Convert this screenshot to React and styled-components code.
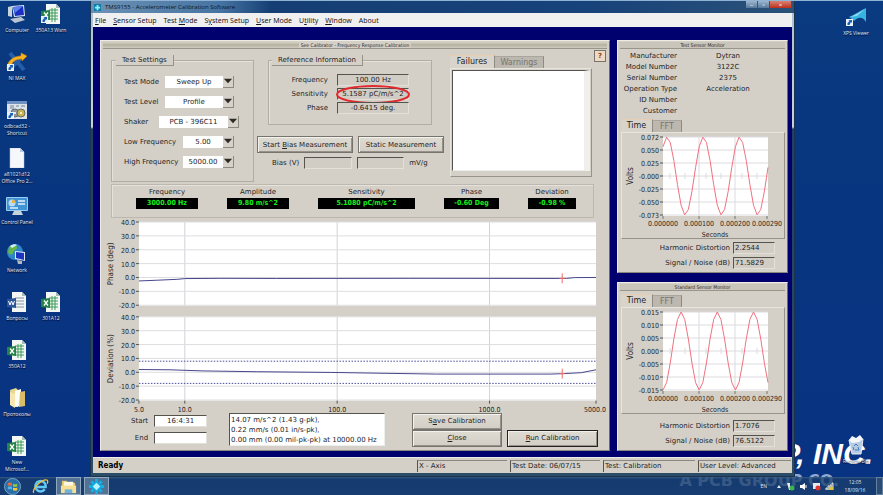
import { Fragment, useState } from "react"
import styled, { createGlobalStyle } from "styled-components"

const Global = createGlobalStyle`
  * { box-sizing: border-box; }
  body {
    margin: 0;
    background: #08357f;
    font-family: "DejaVu Sans", sans-serif;
    font-size: 7px;
    line-height: 10px;
    color: #26241f;
  }
  button, input, select, textarea {
    font: inherit;
    color: inherit;
    margin: 0;
    border-radius: 0;
  }
`

/* ---------- desktop ---------- */

const Page = styled.div`
  position: relative;
  min-height: 100vh;
  display: flex;
  flex-direction: column;
  overflow: hidden;
  background: linear-gradient(#0a3a80, #08357f 40%, #083383);
  border-top: 1px solid #8fb3d4;
`
const Desktop = styled.div`
  flex: 1;
  display: grid;
  grid-template-columns: 90px minmax(0, 1fr) 88px;
`
const Wallpaper = styled.div`
  position: absolute;
  right: 10px;
  bottom: 24px;
  font: italic bold 30px/34px "Liberation Sans", sans-serif;
  color: #fff;
`
const WallpaperSub = styled.div`
  position: absolute;
  right: 44px;
  bottom: 5px;
  font: bold 16px/18px "DejaVu Sans", sans-serif;
  color: #8fa9cf;
`
const Icons = styled.div`
  display: grid;
  grid-template-columns: 34px 34px;
  grid-template-rows: repeat(9, 48px) auto;
  align-content: start;
  padding-top: 3px;
`
const IconLink = styled.a`
  grid-column: ${p => p.$col || 1};
  grid-row: ${p => p.$row};
  display: flex;
  flex-direction: column;
  align-items: center;
  gap: 3px;
  font: 5px/7px "Open Sans", sans-serif;
  color: #e4ebf5;
  text-align: center;
  text-decoration: none;
  white-space: pre;
  text-shadow: 0 1px 1px #001;
  svg { width: 22px; height: 20px; flex: none; }
`
const RightIcons = styled.div`
  z-index: 1;
  display: flex;
  flex-direction: column;
  justify-content: space-between;
  align-items: center;
  padding: 6px 0 12px 34px;
`

function Arrow() {
  return (
    <g>
      <rect x="1" y="12" width="7" height="7" fill="#e9f1fa" />
      <path d="M2.5 18v-2l2-2-1-1h3.5v3l-1-1-1.500 3z" fill="#1c5fb0" />
    </g>
  )
}

function Glyph({ kind, arrow }) {
  return (
    <svg viewBox="0 0 22 20" aria-hidden="true">
      {kind === "computer" && <>
        <path d="M2 3l4-1v11l-4-1z" fill="#c9d3dc" />
        <path d="M6 2l12-1 1 11-11 1z" fill="#dfe7f2" />
        <path d="M7 3l10-1 1 9-9 1z" fill="#1b2fc4" />
        <path d="M7 3l10-1-8 7z" fill="#5a80ee" />
        <path d="M4 15l11-2 4 3-10 3z" fill="#bac5cf" />
      </>}
      {kind === "nimax" && <>
        <path d="M4 1l14 17M18 3L3 18" stroke="#235fa8" strokeWidth="4" />
        <path d="M1 17C1 9 7 4 15 4V1l6 3-5 5V7C9 7 5 10 5 17z" fill="#f7b21d" stroke="#d47f0b" strokeWidth=".5" />
      </>}
      {kind === "tool" && <>
        <rect x="1" y="1" width="20" height="18" fill="#dbe2ea" />
        <rect x="1" y="1" width="20" height="3" fill="#6d92bf" />
        <path d="M4 6h4M10 6h3M15 6h4M4 8h4" stroke="#738498" />
        <circle cx="9" cy="13" r="4" fill="#8f989f" stroke="#606a70" />
        <circle cx="9" cy="13" r="1" fill="#fff" />
        <circle cx="15" cy="13" r="4" fill="#c5b450" stroke="#68706b" />
        <circle cx="15" cy="13" r="1" fill="#fff" />
      </>}
      {kind === "file" && <>
        <path d="M4 0h10l4 4v16H4z" fill="#f5f7fa" stroke="#b9c5d5" strokeWidth=".5" />
        <path d="M14 0v4h4z" fill="#b9c8dc" />
      </>}
      {kind === "control" && <>
        <rect x="0" y="1" width="22" height="14" rx="1" fill="#9bcdf0" />
        <rect x="1" y="2" width="20" height="12" fill="#3f94d5" />
        <circle cx="6" cy="7" r="3.500" fill="#b7dcf3" />
        <path d="M6 7V3.500A3.500 3.500 0 0 1 9.500 7z" fill="#efb247" />
        <path d="M12 5h7M12 8h7M4 12h8" stroke="#e2f1fb" strokeWidth="1.500" />
        <path d="M8 15h7l2 4H6z" fill="#c8d3dc" />
      </>}
      {kind === "network" && <>
        <circle cx="9" cy="8" r="8" fill="#2d86c8" />
        <path d="M3 3c4-3 7-2 8 0s-3 3-4 6-4 2-5-1z" fill="#64b44a" />
        <path d="M4 2c3-2 6-2 7-1L6 4z" fill="#d9eff7" />
        <path d="M9 7l10 1v9l-10-2z" fill="#dfe7f2" />
        <path d="M10 8l8 1v7l-8-2z" fill="#1c35c0" />
        <path d="M11 16l5 1v3h-4z" fill="#aeb9c4" />
      </>}
      {(kind === "excel" || kind === "word") && <>
        <path d="M6 0h10l4 4v16H6z" fill="#f3f7f4" />
        <path d="M16 0v4h4z" fill="#a8bcae" />
        {kind === "excel"
          ? <path d="M9 6h9M9 9h9M9 12h9M9 15h9M12 4v14M15 4v14" stroke="#3f9a5b" />
          : <path d="M9 6h9M9 9h9M9 12h9M9 15h9" stroke="#8494ae" />}
        <path d="M1 7l9-1v10l-9-1z" fill={kind === "excel" ? "#238347" : "#2b579a"} />
        {kind === "excel"
          ? <path d="M4 8.500l4 5M8 8.500l-4 5" stroke="#fff" strokeWidth="1.300" />
          : <path d="M2.500 9l1.500 4 1.500-4 1.500 4 1.500-4" stroke="#fff" fill="none" />}
      </>}
      {kind === "folder" && <>
        <path d="M4 2l6-2 2 2v17l-7-2z" fill="#ead58f" />
        <path d="M9 3l6-2v17l-6 1z" fill="#fdfdf8" />
        <path d="M14 4l5-1v15l-6 1z" fill="#d9bd69" />
        <path d="M4 4l5 2v14l-5-3z" fill="#f6e6af" />
      </>}
      {kind === "xps" && <>
        <path d="M4 10C9 8 14 4 21 1v14c-3-5-7-6-12-1-2-2-3-3-5-4z" fill="#36b3df" />
        <path d="M5 10C10 8 15 5 20 2l-8 7z" fill="#8adcf2" />
      </>}
      {kind === "bin" && <>
        <path d="M4 5l14-1-2 15H7z" fill="#b6cbe2" stroke="#e3eef7" />
        <path d="M4 5l3-4 4 2 4-3 3 4-4 3-7 1z" fill="#f4f7fa" />
        <path d="M9 11l2-2 2 2M13 12l1 3h-4M9 15l-1-3" stroke="#3a7cc4" fill="none" />
      </>}
      {arrow && <Arrow />}
    </svg>
  )
}

const shortcuts = [
  { row: 1, kind: "computer", text: "Computer" },
  { row: 1, col: 2, kind: "excel", text: "350A13 Wsrn", arrow: true },
  { row: 2, kind: "nimax", text: "NI MAX", arrow: true },
  { row: 3, kind: "tool", text: "odbcad32 -\nShortcut", arrow: true },
  { row: 4, kind: "file", text: "a81021d12\nOffice Pro 2..." },
  { row: 5, kind: "control", text: "Control Panel" },
  { row: 6, kind: "network", text: "Network" },
  { row: 7, kind: "word", text: "Вопросы" },
  { row: 7, col: 2, kind: "excel", text: "301A12" },
  { row: 8, kind: "excel", text: "350A12" },
  { row: 9, kind: "folder", text: "Протоколы" },
  { row: 10, kind: "excel", text: "New\nMicrosof..." },
]

/* ---------- application window ---------- */

const AppWindow = styled.main`
  z-index: 1;
  display: flex;
  flex-direction: column;
  min-width: 0;
  padding: 0 2px 3px;
  background: linear-gradient(#a9bfd2, #c5d2dc 126px, #1d4263 128px, #2c4d68);
  border: 1px solid #1a3450;
  border-top: 0;
`
const TitleBar = styled.header`
  height: 12px;
  margin: 0 -2px;
  padding-left: 3px;
  display: flex;
  align-items: center;
  gap: 4px;
  background: linear-gradient(90deg, #6d91b4, #4674a2 130px, #153f74 180px, #17427a 70%, #2c5279);
  font: 6px/10px "Open Sans", sans-serif;
  color: #0a1826;
  svg { width: 7px; height: 7px; }
`
const Caption = styled.span`
  flex: 1;
`
const WinButtons = styled.div`
  display: flex;
  align-self: flex-start;
  padding-right: 2px;
`
const WinButton = styled.button`
  width: ${p => p.$close ? 22 : 12}px;
  height: 7px;
  padding: 0;
  border: 0;
  border-right: 1px solid #34567b;
  background: ${p => p.$close ? "linear-gradient(#d88374, #bd2f1c)" : "linear-gradient(#9db5cd, #56789b)"};
  color: #fff;
  font-size: 6px;
  line-height: 6px;
`
const Menu = styled.nav`
  display: flex;
  gap: 7px;
  height: 14px;
  padding-left: 2px;
  background: #f0f0f0;
  font: 7px/15px "Noto Sans", sans-serif;
  a { color: #17171b; text-decoration: none; white-space: nowrap; }
`
const Workspace = styled.div`
  flex: 1;
  display: flex;
  gap: 7px;
  padding: 13px 4px 6px 7px;
  background: #00006e;
`
const Side = styled.div`
  flex: 0 0 171px;
  display: flex;
  flex-direction: column;
  gap: 9px;
`
const Pane = styled.section`
  flex: ${p => p.$grow ? "1" : "none"};
  min-width: 0;
  display: flex;
  flex-direction: column;
  padding: 1px 2px;
  background: #d4d0c8;
  border: 1px solid #eeebe4;
  border-right-color: #6f6c65;
  border-bottom-color: #8a877f;
`
const PaneTitle = styled.h2`
  display: flex;
  align-items: center;
  justify-content: center;
  gap: 2px;
  height: 7px;
  margin: 0;
  background: ${p => p.$lined ? "none" : "#c9c5ba"};
  border-bottom: 1px solid #98958b;
  font: 5px/6px "DejaVu Sans Condensed", sans-serif;
  &::before, &::after {
    content: "";
    flex: ${p => p.$lined ? 1 : 0};
    height: 6px;
    background: linear-gradient(#d5d2c5, #b4b19f 50%, #d0ccc0);
  }
`
const Main = styled.div`
  flex: 1;
  display: flex;
  flex-direction: column;
`
const Upper = styled.div`
  display: flex;
  align-items: flex-start;
  padding: 3px 0 0 8px;
  height: 134px;
`
const Group = styled.fieldset`
  width: ${p => p.$w}px;
  height: ${p => p.$h}px;
  margin: ${p => p.$push || 0}px 0 0;
  padding: ${p => p.$pad};
  border: 1px solid #b1ada4;
  box-shadow: inset 1px 1px #e5e2dc;
  display: flex;
  flex-direction: column;
  gap: ${p => p.$gap}px;
  legend {
    margin-left: -8px;
    padding: 0 6px;
    font-size: 7px;
    line-height: 10px;
    background: #d4d0c8;
    border-right: 1px solid #96938b;
    border-bottom: 1px solid #96938b;
  }
`
const SettingRow = styled.label`
  display: flex;
  align-items: center;
  justify-content: space-between;
  width: ${p => p.$wide ? 115 : 110}px;
  height: 14px;
  white-space: nowrap;
`
const SelectBox = styled.span`
  position: relative;
  width: ${p => p.$w}px;
  height: 12px;
  select {
    display: block;
    width: 100%;
    height: 12px;
    padding: 0 12px 0 1px;
    appearance: none;
    border: 0;
    background: #fff;
    text-align-last: center;
  }
  svg {
    position: absolute;
    top: 0;
    right: 0;
    width: 11px;
    height: 12px;
    background: #d6d2ca;
    border-right: 1px solid #8b8880;
    border-bottom: 1px solid #8b8880;
    pointer-events: none;
  }
`
const Middle = styled.div`
  width: 187px;
  margin-left: 3px;
  display: flex;
  flex-direction: column;
  padding-top: 3px;
`
const RefRow = styled.label`
  position: relative;
  width: 129px;
  display: grid;
  grid-template-columns: 48px 72px;
  gap: 9px;
  text-align: right;
  align-items: center;
`
const Sunken = styled.input`
  width: ${p => p.$w}px;
  height: 12px;
  min-width: 0;
  padding: 0 1px;
  border: 1px solid #e3e0da;
  border-top-color: #55534e;
  border-left-color: #55534e;
  background: ${p => p.$white ? "#fff" : "#d1cdc5"};
  text-align: ${p => p.$left ? "left" : "center"};
`
const Ring = styled.svg`
  position: absolute;
  right: -2px;
  top: -3px;
  width: 75px;
  height: 19px;
  overflow: visible;
  pointer-events: none;
`
const Line = styled.div`
  display: flex;
  align-items: center;
  gap: ${p => p.$gap}px;
  padding-left: ${p => p.$indent || 0}px;
  margin-top: ${p => p.$top || 0}px;
  white-space: nowrap;
`
const Btn = styled.button`
  width: ${p => p.$w}px;
  height: 17px;
  padding: 0;
  background: linear-gradient(#dedbd3, #d2cec5);
  border: 1px solid ${p => p.$default ? "#22211f" : "#77746d"};
  box-shadow: inset 1px 1px #f4f2ed, inset -1px -1px #96928a;
  white-space: nowrap;
`
const Alerts = styled.div`
  width: 142px;
  margin: 3px 0 0 auto;
`
const Tabs = styled.div`
  display: flex;
  align-items: flex-end;
  height: 13px;
`
const Tab = styled.button`
  width: ${p => p.$w}px;
  height: ${p => p.$on ? 13 : 12}px;
  padding: 0;
  font-size: 8px;
  border: 0;
  border-right: 1px solid #8e8b83;
  border-top: 1px solid ${p => p.$on ? "#e9cdb0" : "#aaa69d"};
  background: ${p => p.$on ? "#d8d4cc" : "#bcb8af"};
  color: ${p => p.$on ? "#26241f" : "#77746e"};
`
const TabBody = styled.div`
  padding: ${p => p.$pad};
  border: 1px solid #e8e5df;
  border-right-color: #96938b;
  border-bottom-color: #96938b;
`
const Messages = styled.textarea`
  display: block;
  width: 100%;
  height: 101px;
  resize: none;
  border: 1px solid #55534e;
  border-right: 6px solid #f1efeb;
  border-bottom-color: #eee;
  background: #fff;
  outline: 0;
`
const Help = styled.button`
  width: 12px;
  height: 12px;
  margin: -2px 1px 0 2px;
  padding: 0;
  border: 1px solid #77746d;
  background: #f0d9c2;
  color: #8a4318;
  font-weight: bold;
  line-height: 8px;
`
const Readouts = styled.div`
  display: flex;
  gap: 29px;
  height: 34px;
  margin: 1px 13px 0 8px;
  padding: 2px 0 2px 24px;
  border: 1px solid #bcb8b0;
  box-shadow: inset 1px 1px #e5e2dc;
`
const Readout = styled.div`
  flex: 0 0 ${p => p.$w}px;
  text-align: center;
  output {
    display: block;
    height: 11px;
    margin-top: 1px;
    background: #000;
    color: #14f21c;
    font-family: "DejaVu Sans Condensed", sans-serif;
    font-weight: bold;
    line-height: 11px;
  }
`
const Plot = styled.svg`
  display: block;
  width: 100%;
  height: auto;
  font-family: "DejaVu Sans Condensed", sans-serif;
  font-size: 7px;
  fill: #26241f;
`
const Footer = styled.div`
  display: flex;
  align-items: center;
  gap: 5px;
  padding: 0 9px 0 28px;
`
const Times = styled.div`
  width: 75px;
  margin-right: 18px;
  display: grid;
  gap: 5px;
  label {
    display: flex;
    align-items: center;
    justify-content: flex-end;
    gap: 6px;
  }
`
const Notes = styled.textarea`
  width: 156px;
  height: 33px;
  margin-right: auto;
  padding: 1px;
  resize: none;
  overflow: hidden;
  white-space: pre;
  line-height: 10px;
  border: 1px solid #eee;
  border-top-color: #55534e;
  border-left-color: #55534e;
  background: #fff;
`
const Stack = styled.div`
  display: flex;
  flex-direction: column;
`
const Info = styled.dl`
  display: grid;
  grid-template-columns: 56px 1fr;
  grid-auto-rows: 11px;
  column-gap: 6px;
  margin: 2px 8px 0 1px;
  line-height: 11px;
  height: 65px;
  dt { justify-self: end; white-space: nowrap; }
  dd { margin: 0 0 0 -4px; text-align: center; }
`
const Monitor = styled.div`
  flex: 1;
  display: flex;
  flex-direction: column;
  padding: 3px 0 0 1px;
`
const Figures = styled.div`
  flex: 1;
  display: grid;
  gap: 3px;
  align-content: end;
  padding: 3px 10px 2px 0;
  label {
    display: flex;
    justify-content: flex-end;
    align-items: center;
    gap: 3px;
  }
`
const Status = styled.footer`
  display: grid;
  grid-template-columns: 1fr 90px 90px 92px 93px;
  gap: 3px;
  align-items: center;
  height: 16px;
  padding: 0 1px 0 5px;
  background: #d4d0c8;
  border-top: 1px solid #eceae5;
  line-height: 11px;
  strong { font: bold 8px/11px "DejaVu Sans Condensed", sans-serif; color: #000; }
  span {
    padding-left: 1px;
    border-top: 1px solid #8b8880;
    border-left: 1px solid #55534e;
    white-space: nowrap;
  }
`

/* ---------- taskbar ---------- */

const Taskbar = styled.div`
  z-index: 2;
  height: 18px;
  display: flex;
  align-items: center;
  gap: 3px;
  background: linear-gradient(#3c5f83f0, #193d6abf 2px, #1b3f6dbf);
  color: #dfe8f2;
`
const TaskButton = styled.button`
  width: 25px;
  height: 18px;
  padding: 0;
  display: grid;
  place-items: center;
  border: ${p => p.$open ? "1px solid #91a9bf" : 0};
  background: ${p => p.$open ? "#7892aaa0" : "none"};
  svg { width: 17px; height: 17px; }
`
const Tray = styled.div`
  margin-left: auto;
  display: flex;
  align-items: center;
  gap: 4px;
  font: 5px/8px "Open Sans", sans-serif;
  text-align: center;
  svg { height: 9px; }
  time { width: 28px; margin: 0 3px; }
`
const TrayLang = styled.span`
  margin-right: 5px;
`
const ShowDesktop = styled.button`
  width: 7px;
  height: 18px;
  padding: 0;
  border: 1px solid #6481a0;
  background: #294d78;
`

function Choice({ label, value, w, wide }) {
  return (
    <SettingRow $wide={wide}>
      {label}
      <SelectBox $w={w}>
        <select defaultValue={value}><option>{value}</option></select>
        <svg viewBox="0 0 11 12"><path d="M1 3h9L5.500 8z" fill="#2c2b28" /></svg>
      </SelectBox>
    </SettingRow>
  )
}

const phase = [[5, -2.5], [6.5, -2], [9, -1.300], [10, -.8], [17, -.6], [40, -.7], [300, -.6], [3200, -.7], [3600, -.1], [5000, 0]]
const deviation = [[5, 2], [8, 1.800], [13, 1], [30, .4], [90, -.1], [200, -.7], [450, -1.300], [2500, -1.300], [3000, -1], [4000, -.3], [5000, 1.800]]

function Response() {
  const x = f => 36 + Math.log10(f / 5) / 3 * 458
  const plots = [
    { top: 4, name: "Phase (deg)", data: phase, mark: -.6 },
    { top: 99, name: "Deviation (%)", data: deviation, mark: -.98, limits: [8, -8] },
  ]
  return (
    <Plot viewBox="0 0 505 195" role="img" aria-label="Frequency response">
      {plots.map(p => {
        const y = v => p.top + (40 - v) * 1.39
        return (
          <g key={p.name}>
            <rect x="36" y={p.top} width="458" height="84" fill="#fff" />
            {[10, 100, 1000].map(f => <path key={f} d={`M${x(f)} ${p.top}v84`} stroke="#d3d3d8" />)}
            {[40, 30, 20, 10, 0, -10, -20].map(v => (
              <g key={v}>
                <path d={`M36 ${y(v)}h458`} stroke="#dedee2" />
                <path d={`M33 ${y(v)}h3`} stroke="#55534e" />
                <text x="32" y={y(v) + 3} textAnchor="end">{v.toFixed(1)}</text>
              </g>
            ))}
            {p.limits?.map(v => <path key={v} d={`M36 ${y(v)}h458`} stroke="#4c4c9c" strokeDasharray="1.500 1.500" />)}
            <polyline points={p.data.map(([f, v]) => `${x(f)},${y(v)}`).join(" ")} fill="none" stroke="#45458c" />
            <path d={`M${x(3000)} ${y(p.mark) - 5}v10m-3-5h6`} stroke="#ee6d6d" fill="none" />
            <text transform={`translate(10 ${p.top + 42}) rotate(-90)`} textAnchor="middle" fontSize="8">{p.name}</text>
          </g>
        )
      })}
      {[5, 10, 100, 1000, 5000].map(f => (
        <g key={f}>
          <path d={`M${x(f)} 183v3`} stroke="#55534e" />
          <text x={Math.min(x(f), 493)} y="194" textAnchor="middle">{f.toFixed(1)}</text>
        </g>
      ))}
    </Plot>
  )
}

function Wave({ ticks, start }) {
  const pts = []
  for (let i = 0; i <= 29; i++) {
    const t = i / 10
    pts.push(`${41 + i / 29 * 105},${45 - 39 * Math.sin(start + t * 2 * Math.PI)}`)
  }
  return (
    <Plot viewBox="0 2 162 105" role="img" aria-label="Volts over seconds">
      <rect x="41" y="6" width="105" height="79" fill="#fff" />
      {ticks.map((t, i) => {
        const y = 6 + i * 13
        return (
          <g key={t}>
            <path d={`M41 ${y}h105`} stroke="#dcdce0" />
            <path d={`M38 ${y}h3`} stroke="#55534e" />
            <text x="37" y={y + 3} textAnchor="end">{t}</text>
          </g>
        )
      })}
      {[77, 113].map(x => <path key={x} d={`M${x} 6v79`} stroke="#dcdce0" />)}
      {[48, 63, 84, 99, 120, 135].map(x => <path key={x} d={`M${x} 42v6`} stroke="#dcdce0" />)}
      <polyline points={pts.join(" ")} fill="none" stroke="#f0717f" />
      {["0.000000", "0.000100", "0.000200", "0.000290"].map((t, i) => (
        <g key={t}>
          <path d={`M${[41, 77, 113, 145][i]} 85v3`} stroke="#77746d" />
          <text x={[41, 77, 113, 145][i]} y="95" textAnchor="middle">{t}</text>
        </g>
      ))}
      <text x="93" y="106" textAnchor="middle">Seconds</text>
      <text transform="translate(11 45) rotate(-90)" textAnchor="middle" fontSize="8">Volts</text>
    </Plot>
  )
}

function Sensor({ ticks, start, distortion, noise }) {
  const [tab, setTab] = useState("Time")
  return (
    <Monitor>
      <Tabs>
        <Tab $w={32} $on={tab === "Time"} onClick={() => setTab("Time")}>Time</Tab>
        <Tab $w={29} $on={tab === "FFT"} onClick={() => setTab("FFT")}>FFT</Tab>
      </Tabs>
      <TabBody $pad="0"><Wave ticks={ticks} start={start} /></TabBody>
      <Figures>
        <label>Harmonic Distortion <Sunken $w={42} $left readOnly value={distortion} /></label>
        <label>Signal / Noise (dB) <Sunken $w={42} $left readOnly value={noise} /></label>
      </Figures>
    </Monitor>
  )
}

const info = [
  ["Manufacturer", "Dytran"],
  ["Model Number", "3122C"],
  ["Serial Number", "2375"],
  ["Operation Type", "Acceleration"],
  ["ID Number", ""],
  ["Customer", ""],
]

const readouts = [
  ["Frequency", "3000.00 Hz", 62],
  ["Amplitude", "9.80 m/s^2", 62],
  ["Sensitivity", "5.1080 pC/m/s^2", 97],
  ["Phase", "-0.60 Deg", 55],
  ["Deviation", "-0.98 %", 48],
]

function Calibrator() {
  const [tab, setTab] = useState("Failures")
  return (
    <Pane $grow>
      <PaneTitle $lined>See Calibrator - Frequency Response Calibration</PaneTitle>
      <Main>
        <Upper>
          <Group $w={143} $h={127} $push={3} $pad="9px 0 0 12px" $gap={6}>
            <legend>Test Settings</legend>
            <Choice label="Test Mode" value="Sweep Up" w={69} />
            <Choice label="Test Level" value="Profile" w={69} />
            <Choice label="Shaker" value="PCB - 396C11" w={80} wide />
            <Choice label="Low Frequency" value="5.00" w={51} />
            <Choice label="High Frequency" value="5000.00" w={51} />
          </Group>
          <Middle>
            <Line $indent={11}>
              <Group $w={164} $h={70} $pad="8px 0 0 11px" $gap={2}>
                <legend>Reference Information</legend>
                <RefRow>Frequency<Sunken $w={72} readOnly value="100.00 Hz" /></RefRow>
                <RefRow>
                  Sensitivity<Sunken $w={72} readOnly value="5.1587 pC/m/s^2" />
                  <Ring viewBox="0 0 75 19"><ellipse cx="37" cy="9.500" rx="36" ry="8.500" fill="none" stroke="#e02a2e" strokeWidth="2" /></Ring>
                </RefRow>
                <RefRow>Phase<Sunken $w={72} readOnly value="-0.6415 deg." /></RefRow>
              </Group>
            </Line>
            <Line $gap={5} $top={11}>
              <Btn $w={96}>Start <u>B</u>ias Measurement</Btn>
              <Btn $w={86}>Static Measurement</Btn>
            </Line>
            <Line $gap={5} $indent={15} $top={4}>
              <label htmlFor="bias">Bias (V)</label>
              <Sunken id="bias" $w={48} readOnly />
              <Sunken aria-label="Bias mV/g" $w={47} readOnly />
              mV/g
            </Line>
          </Middle>
          <Alerts>
            <Tabs>
              <Tab $w={45} $on={tab === "Failures"} onClick={() => setTab("Failures")}>Failures</Tab>
              <Tab $w={49} $on={tab === "Warnings"} onClick={() => setTab("Warnings")}>Warnings</Tab>
            </Tabs>
            <TabBody $pad="1px 1px 5px">
              <Messages readOnly aria-label={tab} />
            </TabBody>
          </Alerts>
          <Help>?</Help>
        </Upper>
        <Readouts>
          {readouts.map(([name, value, w]) => (
            <Readout key={name} $w={w}>{name}<output>{value}</output></Readout>
          ))}
        </Readouts>
        <Response />
        <Footer>
          <Times>
            <label>Start <Sunken $w={53} $white readOnly value="16:4:31" /></label>
            <label>End <Sunken $w={53} $white readOnly value="" /></label>
          </Times>
          <Notes readOnly aria-label="Levels" value={"14.07 m/s^2 (1.43 g-pk),\n0.22 mm/s (0.01 in/s-pk),\n0.00 mm (0.00 mil-pk-pk) at 10000.00 Hz"} />
          <Stack>
            <Btn $w={90}>S<u>a</u>ve Calibration</Btn>
            <Btn $w={90}><u>C</u>lose</Btn>
          </Stack>
          <Line $top={17}><Btn $w={91} $default><u>R</u>un Calibration</Btn></Line>
        </Footer>
      </Main>
    </Pane>
  )
}

export default function App() {
  return (
    <Page>
      <Global />
      <Wallpaper>P, INC.</Wallpaper>
      <WallpaperSub>A PCB GROUP CO.</WallpaperSub>
      <Desktop>
        <Icons>
          {shortcuts.map(s => (
            <IconLink key={s.text} href="#" $row={s.row} $col={s.col}>
              <Glyph kind={s.kind} arrow={s.arrow} />
              {s.text}
            </IconLink>
          ))}
        </Icons>
        <AppWindow>
          <TitleBar>
            <svg viewBox="0 0 8 8"><path d="M0 0h8v8H0z" fill="#0c7fa8" /><path d="M4 1v6M1 4h6" stroke="#8ff1ff" strokeWidth="2" /></svg>
            <Caption>TMS9155 - Accelerometer Calibration Software</Caption>
            <WinButtons>
              <WinButton aria-label="Minimize">‒</WinButton>
              <WinButton aria-label="Restore">▫</WinButton>
              <WinButton $close aria-label="Close">×</WinButton>
            </WinButtons>
          </TitleBar>
          <Menu>
            <a href="#"><u>F</u>ile</a>
            <a href="#"><u>S</u>ensor Setup</a>
            <a href="#">Test <u>M</u>ode</a>
            <a href="#">S<u>y</u>stem Setup</a>
            <a href="#"><u>U</u>ser Mode</a>
            <a href="#">U<u>t</u>ility</a>
            <a href="#"><u>W</u>indow</a>
            <a href="#">About</a>
          </Menu>
          <Workspace>
            <Calibrator />
            <Side>
              <Pane>
                <PaneTitle>Test Sensor Monitor</PaneTitle>
                <Info>
                  {info.map(([k, v]) => <Fragment key={k}><dt>{k}</dt><dd>{v}</dd></Fragment>)}
                </Info>
                <Sensor start={.85} distortion="2.2544" noise="71.5829"
                  ticks={["0.072", "0.050", "0.025", "-0.000", "-0.025", "-0.050", "-0.073"]} />
              </Pane>
              <Pane $grow>
                <PaneTitle>Standard Sensor Monitor</PaneTitle>
                <Sensor start={-1.570} distortion="1.7076" noise="76.5122"
                  ticks={["0.015", "0.010", "0.005", "0.000", "-0.005", "-0.010", "-0.015"]} />
              </Pane>
            </Side>
          </Workspace>
          <Status>
            <strong>Ready</strong>
            <span>X - Axis</span>
            <span>Test Date: 06/07/15</span>
            <span>Test: Calibration</span>
            <span>User Level: Advanced</span>
          </Status>
        </AppWindow>
        <RightIcons>
          <IconLink href="#"><Glyph kind="xps" arrow />XPS Viewer</IconLink>
          <IconLink href="#"><Glyph kind="bin" />Recycle Bin</IconLink>
        </RightIcons>
      </Desktop>
      <Taskbar>
        <TaskButton aria-label="Start">
          <svg viewBox="0 0 18 18">
            <circle cx="9" cy="9" r="8.500" fill="#2a6ea8" stroke="#79a9cd" />
            <path d="M4 5.500q2-1.500 4.500 0v3q-2.500-1.500-4.500 0z" fill="#ef6a35" />
            <path d="M9.500 6q2 1.200 4.500 0v3q-2.500 1-4.500 0z" fill="#92c83e" />
            <path d="M4 9.500q2-1.500 4.500 0v3q-2.500-1.500-4.500 0z" fill="#53b4ea" />
            <path d="M9.500 10q2 1.200 4.500 0v3q-2.500 1-4.500 0z" fill="#fcc934" />
          </svg>
        </TaskButton>
        <TaskButton aria-label="Internet Explorer">
          <svg viewBox="0 0 18 18">
            <path d="M13.500 12A5.500 5.500 0 1 1 14.500 9.500H4" fill="none" stroke="#63c8f4" strokeWidth="2.600" />
            <path d="M2 15.500C-1 13 9 2 15 2c2 0 2 2 1 4" fill="none" stroke="#f2c33c" strokeWidth="1.400" />
          </svg>
        </TaskButton>
        <TaskButton $open aria-label="Explorer">
          <svg viewBox="0 0 18 18">
            <path d="M2 3h5l1 2h8v11H2z" fill="#e8c76a" />
            <path d="M4 4h10v5H4z" fill="#fdf8df" />
            <path d="M1 8h16v8H1z" fill="#f6df93" />
            <path d="M5 12h8v4H5z" fill="#6fb2df" />
          </svg>
        </TaskButton>
        <TaskButton $open aria-label="Calibration Software">
          <svg viewBox="0 0 18 18">
            <path d="M9 1v16M1 9h16M3.500 3.500l11 11M14.500 3.500l-11 11" stroke="#0fb2e6" strokeWidth="3" />
            <circle cx="9" cy="9" r="5" fill="#13a9df" />
            <path d="M9 5l4 4-4 4-4-4z" fill="#b8f3ff" />
          </svg>
        </TaskButton>
        <Tray>
          <TrayLang>EN</TrayLang>
          <svg viewBox="0 0 6 9" width="6"><path d="M1 6l2-3 2 3z" fill="#e8eef5" /></svg>
          <svg viewBox="0 0 9 9" width="9"><path d="M1 1h3v4h4v3H3z" fill="#e1e8ee" /><circle cx="6" cy="6" r="2.500" fill="#3db54a" /></svg>
          <svg viewBox="0 0 9 9" width="9"><path d="M1 3h2l3-2v7L3 6H1z" fill="#fff" /><path d="M7 3v3" stroke="#fff" /></svg>
          <svg viewBox="0 0 9 9" width="9"><path d="M1 1h7v6H1z" fill="#e4e9ee" /><circle cx="6" cy="6" r="2.500" fill="#dd3535" /></svg>
          <svg viewBox="0 0 9 9" width="9"><path d="M1 8V6h1v2M3 8V4h1v4M5 8V3h1v5M7 8V1h1v7" stroke="#e6eef2" /><path d="M4 5h4v3H4z" fill="#d8c733" /></svg>
          <time>12:05<br />18/09/16</time>
          <ShowDesktop aria-label="Show desktop" />
        </Tray>
      </Taskbar>
    </Page>
  )
}
